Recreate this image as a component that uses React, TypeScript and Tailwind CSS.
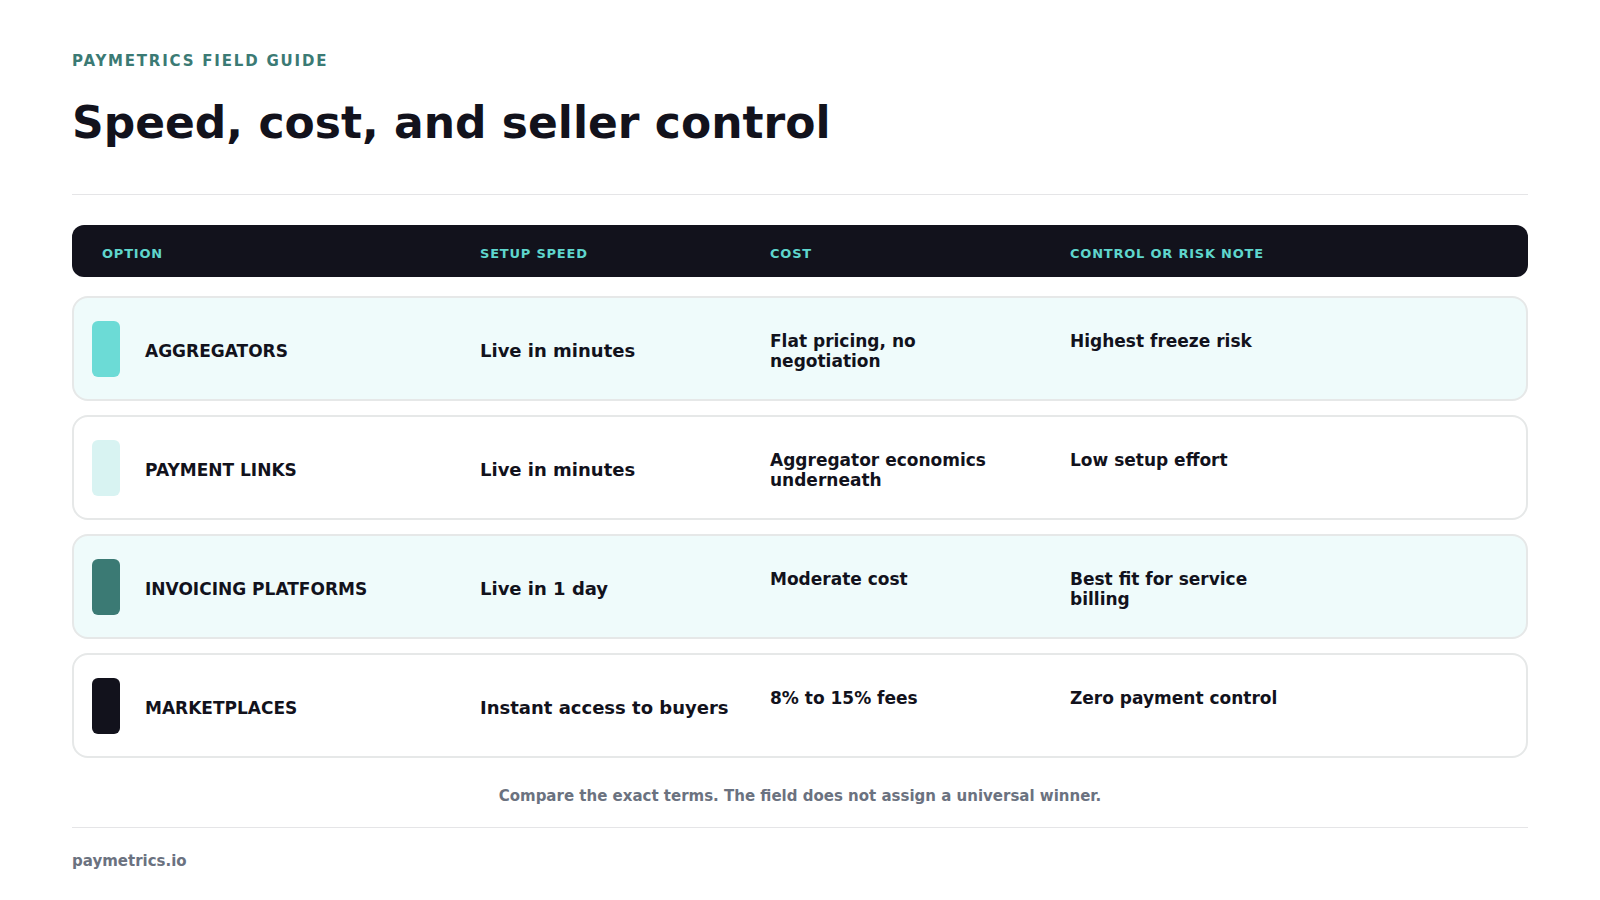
const rows = [
  {
    option: "AGGREGATORS",
    swatch: "bg-[#6cdbd6]",
    tinted: true,
    speed: "Live in minutes",
    cost: "Flat pricing, no negotiation",
    note: "Highest freeze risk",
  },
  {
    option: "PAYMENT LINKS",
    swatch: "bg-[#d8f3f2]",
    tinted: false,
    speed: "Live in minutes",
    cost: "Aggregator economics underneath",
    note: "Low setup effort",
  },
  {
    option: "INVOICING PLATFORMS",
    swatch: "bg-[#3b7a74]",
    tinted: true,
    speed: "Live in 1 day",
    cost: "Moderate cost",
    note: "Best fit for service billing",
  },
  {
    option: "MARKETPLACES",
    swatch: "bg-[#12121c]",
    tinted: false,
    speed: "Instant access to buyers",
    cost: "8% to 15% fees",
    note: "Zero payment control",
  },
]

const App = () => {
  return (
    <div className="min-h-screen bg-white px-[72px] pt-[51px] font-['DejaVu_Sans',sans-serif] text-[#12121c]">
      {/* heading */}
      <div className="text-[15px] leading-[20px] font-bold tracking-[0.12em] text-[#3b7a74]">
        PAYMETRICS FIELD GUIDE
      </div>
      <h1 className="mt-[25px] text-[44px] leading-[53px] font-bold">
        Speed, cost, and seller control
      </h1>
      <div className="mt-[45px] h-px bg-[#e5e5e7]" />

      {/* table header */}
      <div className="mt-[30px] flex h-[52px] items-center rounded-xl bg-[#12121c] pt-[5px] pl-[30px] text-[13px] font-bold tracking-[0.06em] text-[#5fd6cd]">
        <div className="w-[378px]">OPTION</div>
        <div className="w-[290px]">SETUP SPEED</div>
        <div className="w-[300px]">COST</div>
        <div>CONTROL OR RISK NOTE</div>
      </div>

      {/* rows */}
      <div className="mt-[19px] flex flex-col gap-[14px]">
        {rows.map((row) => (
          <div
            key={row.option}
            className={`flex h-[105px] items-center rounded-2xl border-2 border-[#e6e8e8] pl-[18px] text-[17px] leading-[1.2] font-bold ${
              row.tinted ? "bg-[#effbfb]" : "bg-white"
            }`}
          >
            <div className="flex w-[388px] items-center gap-[25px]">
              <div className={`h-[56px] w-[28px] rounded-md ${row.swatch}`} />
              <span className="pt-[5px]">{row.option}</span>
            </div>
            <div className="w-[290px] pt-[5px] text-[18px]">{row.speed}</div>
            {/* cost + note keep a two-line box so short text sits on the first line */}
            <div className="min-h-[46px] w-[300px] pt-[5px]">
              <div className="max-w-[228px]">{row.cost}</div>
            </div>
            <div className="min-h-[46px] pt-[5px]">
              <div className="max-w-[228px]">{row.note}</div>
            </div>
          </div>
        ))}
      </div>

      {/* footer */}
      <p className="mt-[28px] text-center text-[15px] leading-[20px] font-bold text-[#6b7280]">
        Compare the exact terms. The field does not assign a universal winner.
      </p>
      <div className="mt-[21px] h-px bg-[#e5e5e7]" />
      <div className="mt-[23px] text-[15px] leading-[20px] font-bold text-[#6b7280]">paymetrics.io</div>
    </div>
  )
}

export default App
